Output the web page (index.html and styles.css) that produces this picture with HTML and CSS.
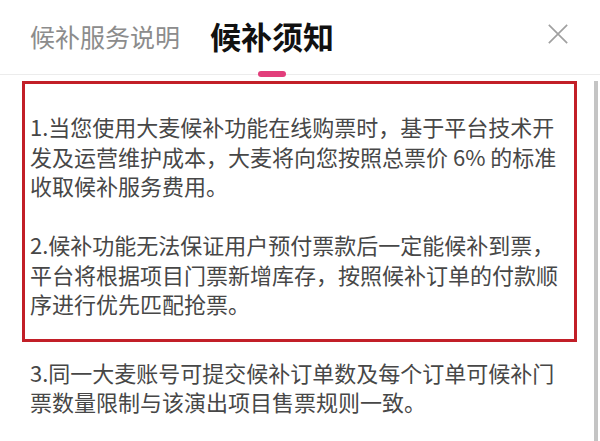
FILE: index.html
```html
<!DOCTYPE html>
<html lang="zh-CN">
<head>
<meta charset="utf-8">
<title>候补须知</title>
<link rel="stylesheet" href="styles.css">
</head>
<body>
<div class="sheet">
  <header class="tabs">
    <div class="tab">候补服务说明</div>
    <div class="tab active">候补须知<span class="indicator"></span></div>
    <button class="close" aria-label="关闭">
      <svg viewBox="0 0 24 24" width="22" height="22"><path d="M2 2 L22 22 M22 2 L2 22" stroke="#a0a0a0" stroke-width="1.8" fill="none"/></svg>
    </button>
  </header>
  <div class="body">
    <main class="content">
      <div class="highlight">
        <p>1.当您使用大麦候补功能在线购票时，基于平台技术开<br>发及运营维护成本，大麦将向您按照总票价 6% 的标准<br>收取候补服务费用。</p>
        <p>2.候补功能无法保证用户预付票款后一定能候补到票，<br>平台将根据项目门票新增库存，按照候补订单的付款顺<br>序进行优先匹配抢票。</p>
      </div>
      <p class="after">3.同一大麦账号可提交候补订单数及每个订单可候补门<br>票数量限制与该演出项目售票规则一致。</p>
    </main>
    <div class="scrollbar"></div>
  </div>
</div>
</body>
</html>
```
FILE: styles.css
```css
html, body {
  margin: 0;
  padding: 0;
  background: #fff;
}
body {
  font-family: "Noto Sans CJK SC", "Noto Sans", sans-serif;
  width: 600px;
  height: 441px;
  overflow: hidden;
}
.sheet {
  display: flex;
  flex-direction: column;
  height: 441px;
}
.tabs {
  position: relative;
  display: flex;
  align-items: center;
  height: 75px;
  border-bottom: 1px solid #ececec;
  padding-left: 30px;
  padding-bottom: 3px;
  box-sizing: border-box;
}
.tab {
  font-size: 25px;
  color: #8c8c8c;
  line-height: 30px;
  margin-right: 30px;
  position: relative;
}
.tab.active {
  font-size: 31px;
  font-weight: 700;
  color: #111;
}
.indicator {
  position: absolute;
  left: 50%;
  bottom: -26px;
  transform: translateX(-50%);
  width: 28px;
  height: 6px;
  border-radius: 3px;
  background: #e23e7b;
}
.close {
  margin-left: auto;
  margin-right: 31px;
  margin-bottom: 4px;
  border: 0;
  background: none;
  padding: 0;
  width: 22px;
  height: 22px;
  display: flex;
}
.body {
  flex: 1;
  display: flex;
  padding-top: 6px;
}
.content {
  flex: 1;
  padding-left: 30px;
}
.scrollbar {
  width: 4px;
  margin-right: 2px;
  background: #c4c4c4;
}
.highlight {
  margin-left: -8px;
  width: 555px;
  border: 3px solid #c21f28;
  padding: 28px 0 20px 5px;
  box-sizing: border-box;
}
p {
  margin: 0;
  font-size: 22px;
  line-height: 29.5px;
  color: #474747;
  white-space: nowrap;
}
.highlight p + p {
  margin-top: 29.5px;
}
.after {
  margin-top: 16px;
}
```
